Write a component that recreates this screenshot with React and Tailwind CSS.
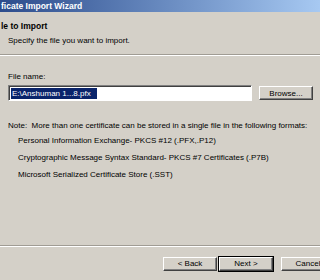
import React from 'react';

const font = { fontFamily: '"Liberation Sans", Arial, sans-serif' };

function WinButton({ children, isDefault }) {
    return (
        <div className={isDefault ? 'border border-black' : 'border border-transparent'}>
            <div className="w-[54px] h-[14px] flex items-center justify-center border-t border-l border-t-white border-l-white border-b border-r border-b-[#404040] border-r-[#404040] shadow-[inset_-1px_-1px_#808080] text-[8px] text-black bg-[#d4d0c8]">
                {children}
            </div>
        </div>
    );
}

export default function App() {
    return (
        <div className="w-[320px] h-[280px] bg-[#d4d0c8] overflow-hidden flex flex-col" style={font}>
            {/* title bar */}
            <div className="h-[12px] bg-gradient-to-r from-[#2d4c8c] to-[#a7c9f2] flex items-center whitespace-nowrap">
                <span className="ml-[1px] text-[8.5px] font-bold text-white leading-none">ficate Import Wizard</span>
            </div>

            {/* header */}
            <div className="h-[42px] flex flex-col pt-[10px] whitespace-nowrap">
                <span className="ml-[1px] text-[8.5px] font-bold text-black leading-[9px]">le to Import</span>
                <span className="ml-[8px] mt-[5px] text-[8px] text-black leading-[9px]">Specify the file you want to import.</span>
            </div>
            <div className="border-t border-[#a09c94] border-b border-b-white" />

            {/* body */}
            <div className="flex flex-col pl-[8px] pt-[16px] whitespace-nowrap text-[8px] text-black leading-[9px]">
                <span>File name:</span>
                <div className="flex items-center mt-[4px]">
                    <div className="w-[244px] h-[16px] bg-white border-t border-l border-t-[#808080] border-l-[#808080] border-b border-r border-b-white border-r-white shadow-[inset_1px_1px_#404040] flex items-center pl-[2px]">
                        <span className="bg-[#0a246a] text-white px-[1px] h-[11px] w-[86px] flex items-center">E:\Anshuman 1...8.pfx</span>
                    </div>
                    <div className="ml-[6px]">
                        <WinButton>Browse...</WinButton>
                    </div>
                </div>
                <span className="mt-[20px]">Note:&nbsp;&nbsp;More than one certificate can be stored in a single file in the following formats:</span>
                <div className="flex flex-col pl-[10px] mt-[6px] gap-[8px]">
                    <span>Personal Information Exchange- PKCS #12 (.PFX,.P12)</span>
                    <span>Cryptographic Message Syntax Standard- PKCS #7 Certificates (.P7B)</span>
                    <span>Microsoft Serialized Certificate Store (.SST)</span>
                </div>
            </div>

            <div className="flex-1" />
            {/* footer */}
            <div className="border-t border-[#a09c94] border-b border-b-white" />
            <div className="h-[33px] flex items-start pt-[9px] pl-[162px] whitespace-nowrap">
                <WinButton>&lt; Back</WinButton>
                <WinButton isDefault>Next &gt;</WinButton>
                <div className="ml-[6px]">
                    <WinButton>Cancel</WinButton>
                </div>
            </div>
        </div>
    );
}
